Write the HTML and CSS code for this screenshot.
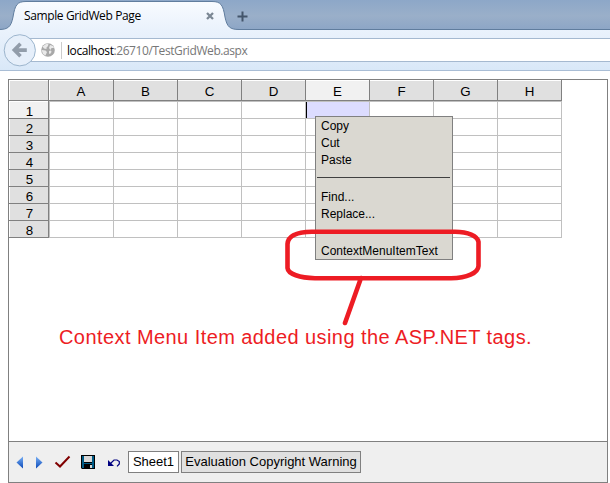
FILE: index.html
```
<!DOCTYPE html>
<html lang="en">
<head>
<meta charset="utf-8">
<title>Sample GridWeb Page</title>
<link rel="stylesheet" href="styles.css">
</head>
<body>
<header class="tabstrip">
  <svg class="tabshape" width="240" height="30" viewBox="0 0 240 30" aria-hidden="true">
    <defs><linearGradient id="tab" x1="0" y1="0" x2="0" y2="1"><stop offset="0" stop-color="#f8fbff"/><stop offset="1" stop-color="#eaf2fc"/></linearGradient></defs>
    <path d="M0 30V29.5C9 29.5 12 27 14 17C16 5 18 1.5 27 1.5H213C222 1.5 224 5 226 17C228 27 231 29.5 240 29.5V30Z" fill="url(#tab)"/>
    <path d="M0 29.5C9 29.5 12 27 14 17C16 5 18 1.5 27 1.5H213C222 1.5 224 5 226 17C228 27 231 29.5 240 29.5" fill="none" stroke="#607d9e"/>
  </svg>
  <span class="tabtitle">Sample GridWeb Page</span>
  <svg class="close" width="8" height="8" viewBox="0 0 8 8"><path d="M1 1L7 7M7 1L1 7" stroke="#7b8794" stroke-width="2.3"/></svg>
  <svg class="plus" width="11" height="11" viewBox="0 0 11 11"><path d="M5.5 .5V10.5M.5 5.5H10.5" stroke="#43556b" stroke-width="2"/></svg>
</header>
<nav class="toolbar">
  <svg class="back" width="33" height="33" viewBox="0 0 33 33"><circle cx="16.8" cy="16.3" r="15.6" fill="#e6effa" stroke="#9cb5cd"/><path d="M17.5 9.8L11.3 16.1L17.5 22.3M12 16.1H23.8" fill="none" stroke="#929daa" stroke-width="3.6"/></svg>
  <div class="urlbar">
    <svg width="14" height="14" viewBox="0 0 14 14"><circle cx="7" cy="7" r="6.8" fill="#a8a8a8"/><path d="M5 1L7.5 .5L7 3L5.5 4.5L5.5 6L3 5.5L1.5 3.5ZM.6 7L4.5 7.5L6 9L4.5 12.5L2 11ZM9 2L12 3L13 5L10.5 5L9.5 7L8 5ZM8 8L10 7.5L10.5 9L9 11L8 10.5Z" fill="#e9e9e9"/></svg>
    <i class="urlsep"></i>
    <span class="url"><b>localhost</b>:26710/TestGridWeb.aspx</span>
  </div>
</nav>
<main class="gridweb">
  <div class="sheet">
    <div class="h corner"></div><div class="h first">A</div><div class="h">B</div><div class="h">C</div><div class="h">D</div><div class="h current">E</div><div class="h">F</div><div class="h">G</div><div class="h">H</div>
    <div class="r top current">1</div><div class="c first top"></div><div class="c top"></div><div class="c top"></div><div class="c top"></div><div class="c top active"></div><div class="c top"></div><div class="c top"></div><div class="c top"></div>
    <div class="r">2</div><div class="c first"></div><div class="c"></div><div class="c"></div><div class="c"></div><div class="c"></div><div class="c"></div><div class="c"></div><div class="c"></div>
    <div class="r">3</div><div class="c first"></div><div class="c"></div><div class="c"></div><div class="c"></div><div class="c"></div><div class="c"></div><div class="c"></div><div class="c"></div>
    <div class="r">4</div><div class="c first"></div><div class="c"></div><div class="c"></div><div class="c"></div><div class="c"></div><div class="c"></div><div class="c"></div><div class="c"></div>
    <div class="r">5</div><div class="c first"></div><div class="c"></div><div class="c"></div><div class="c"></div><div class="c"></div><div class="c"></div><div class="c"></div><div class="c"></div>
    <div class="r">6</div><div class="c first"></div><div class="c"></div><div class="c"></div><div class="c"></div><div class="c"></div><div class="c"></div><div class="c"></div><div class="c"></div>
    <div class="r">7</div><div class="c first"></div><div class="c"></div><div class="c"></div><div class="c"></div><div class="c"></div><div class="c"></div><div class="c"></div><div class="c"></div>
    <div class="r">8</div><div class="c first"></div><div class="c"></div><div class="c"></div><div class="c"></div><div class="c"></div><div class="c"></div><div class="c"></div><div class="c"></div>
  </div>
  <footer class="sheetbar">
    <svg class="icons" width="112" height="40" viewBox="9 442 112 40">
      <defs><linearGradient id="arrow" x1="0" y1="0" x2="0" y2="1"><stop offset="0" stop-color="#79b0f5"/><stop offset="1" stop-color="#0a48b8"/></linearGradient></defs>
      <path d="M23 456.5V468.5L16.5 462.5Z" fill="url(#arrow)"/>
      <path d="M36 456.5V468.5L42.5 462.5Z" fill="url(#arrow)"/>
      <path d="M55.5 462.5L60 466.5L69.5 456.5" fill="none" stroke="#800000" stroke-width="2"/>
      <path d="M81 455H95V469H82L81 468Z" fill="#000"/>
      <path d="M82 456H84V463H92V456H94V468H92V464H84V468H82Z" fill="#005b85"/>
      <path d="M84 456H92V462H84ZM90 465H92V468H90Z" fill="#d8d8d8"/>
      <path d="M110 464L114 460H117L119.3 461.5V464L117 466.3" fill="none" stroke="#000080" stroke-width="1.2"/>
      <path d="M108 460V466H114Z" fill="#000080"/>
    </svg>
    <span class="sheettab selected">Sheet1</span>
    <span class="sheettab warning">Evaluation Copyright Warning</span>
  </footer>
</main>
<div class="menu">
  <div>Copy</div><div>Cut</div><div>Paste</div>
  <hr>
  <div>Find...</div><div>Replace...</div>
  <div class="custom">ContextMenuItemText</div>
</div>
<svg class="callout" width="200" height="100" viewBox="284 228 200 100"><path d="M312 231.8H455C468 232 477.5 236 478.5 242V266C478 273 467 278 451 278.3H315C300 278 288 274 287.5 268V244C288 236 297 232 312 231.8M361 278L345 323" fill="none" stroke="#ed1c24" stroke-width="4.6" stroke-linecap="round"/></svg>
<p class="note">Context Menu Item added using the ASP.NET tags.</p>
</body>
</html>
```
FILE: styles.css
```
* { box-sizing: border-box; }
body {
  margin: 0;
  width: 610px;
  height: 483px;
  overflow: hidden;
  position: relative;
  background: #fff;
  color: #000;
  font-family: "Liberation Sans", Arial, sans-serif;
}
.tabstrip {
  position: relative;
  height: 30px;
  display: flex;
  align-items: center;
  background: linear-gradient(#8da7c8, #9aafc9 55%, #8da6c6);
  border-bottom: 1px solid #607d9e;
}
.tabshape { position: absolute; left: -1px; top: 0; }
.tabtitle {
  position: relative;
  width: 182px;
  margin-left: 24px;
  margin-top: 2px;
  font: 12px/16px "Open Sans", sans-serif;
  letter-spacing: -0.38px;
  white-space: nowrap;
}
.close { position: relative; margin-top: 3px; }
.plus { position: relative; margin: 3px 0 0 23px; }
.toolbar {
  position: relative;
  height: 41px;
  padding-top: 8px;
  background: linear-gradient(#eaf2fc, #d9e8f8);
  border-bottom: 1px solid #a9bdd5;
}
.back { position: absolute; left: 3px; top: 4px; z-index: 1; }
.urlbar {
  display: flex;
  align-items: center;
  height: 24px;
  margin-left: 28px;
  padding-left: 13px;
  background: #fff;
  border: solid #a5b9d0;
  border-width: 1px 0;
}
.urlsep { width: 1px; height: 17px; margin: 0 5px 0 6px; background: #ccc; }
.url {
  margin-top: 2px;
  font: 12px/16px "Open Sans", sans-serif;
  letter-spacing: -0.42px;
  color: #777;
  white-space: nowrap;
}
.url b { font-weight: 400; color: #000; }
.gridweb {
  display: flex;
  flex-direction: column;
  justify-content: space-between;
  width: 600px;
  height: 404px;
  margin: 8px 0 0 8px;
  border: 1px solid #808080;
}
.sheet {
  display: grid;
  grid-template-columns: 40px 65px repeat(7, 64px);
  grid-template-rows: 21px 18px repeat(7, 17px);
  font-size: 13.33px;
  text-align: center;
}
.h, .r { background: #e0e0e0; border: 0 solid #808080; border-right-width: 1px; border-bottom-width: 1px; }
.h { box-shadow: inset 0 1px #fff; line-height: 23px; }
.h.first { box-shadow: inset 1px 1px #fff; }
.r { line-height: 20px; padding-left: 2px; box-shadow: inset 1px 0 #fff; }
.r.top { padding-top: 1px; box-shadow: inset 1px 1px #fff; }
.corner { box-shadow: inset 1px 1px #fff; }
.current { background: #f1f1f1; }
.c { border: 0 solid #c0c0c0; border-right-width: 1px; border-bottom-width: 1px; }
.c.first { border-left-width: 1px; }
.c.top { border-top-width: 1px; }
.active { background: linear-gradient(90deg, #000 1px, #dcdcff 1px); }
.sheetbar {
  display: flex;
  align-items: center;
  height: 41px;
  background: #efefef;
  border-top: 1px solid #808080;
}
.sheettab {
  height: 22px;
  margin-left: 2px;
  border: 1px solid #808080;
  background: #e0e0e0;
  font-size: 13px;
  line-height: 20px;
  text-align: center;
  white-space: nowrap;
}
.icons { flex: none; margin-right: 5px; }
.selected { width: 51px; background: #fff; }
.warning { width: 180px; }
.menu {
  position: absolute;
  left: 315px;
  top: 116px;
  width: 138px;
  height: 144px;
  padding: 1px 2px 0 1px;
  border: 1px solid #808080;
  background: #dad8d1;
  font-size: 12px;
  line-height: 17px;
  white-space: nowrap;
}
.menu div { padding-left: 4px; }
.menu hr { height: 1px; margin: 8px 0 11px; border: 0; background: #404040; }
.menu .custom { margin-top: 20px; }
.callout { position: absolute; left: 284px; top: 228px; }
.note {
  position: absolute;
  left: 59px;
  top: 325px;
  margin: 0;
  color: #ed1c24;
  font-size: 20px;
  line-height: 24px;
  letter-spacing: 0.43px;
  white-space: nowrap;
}
```
